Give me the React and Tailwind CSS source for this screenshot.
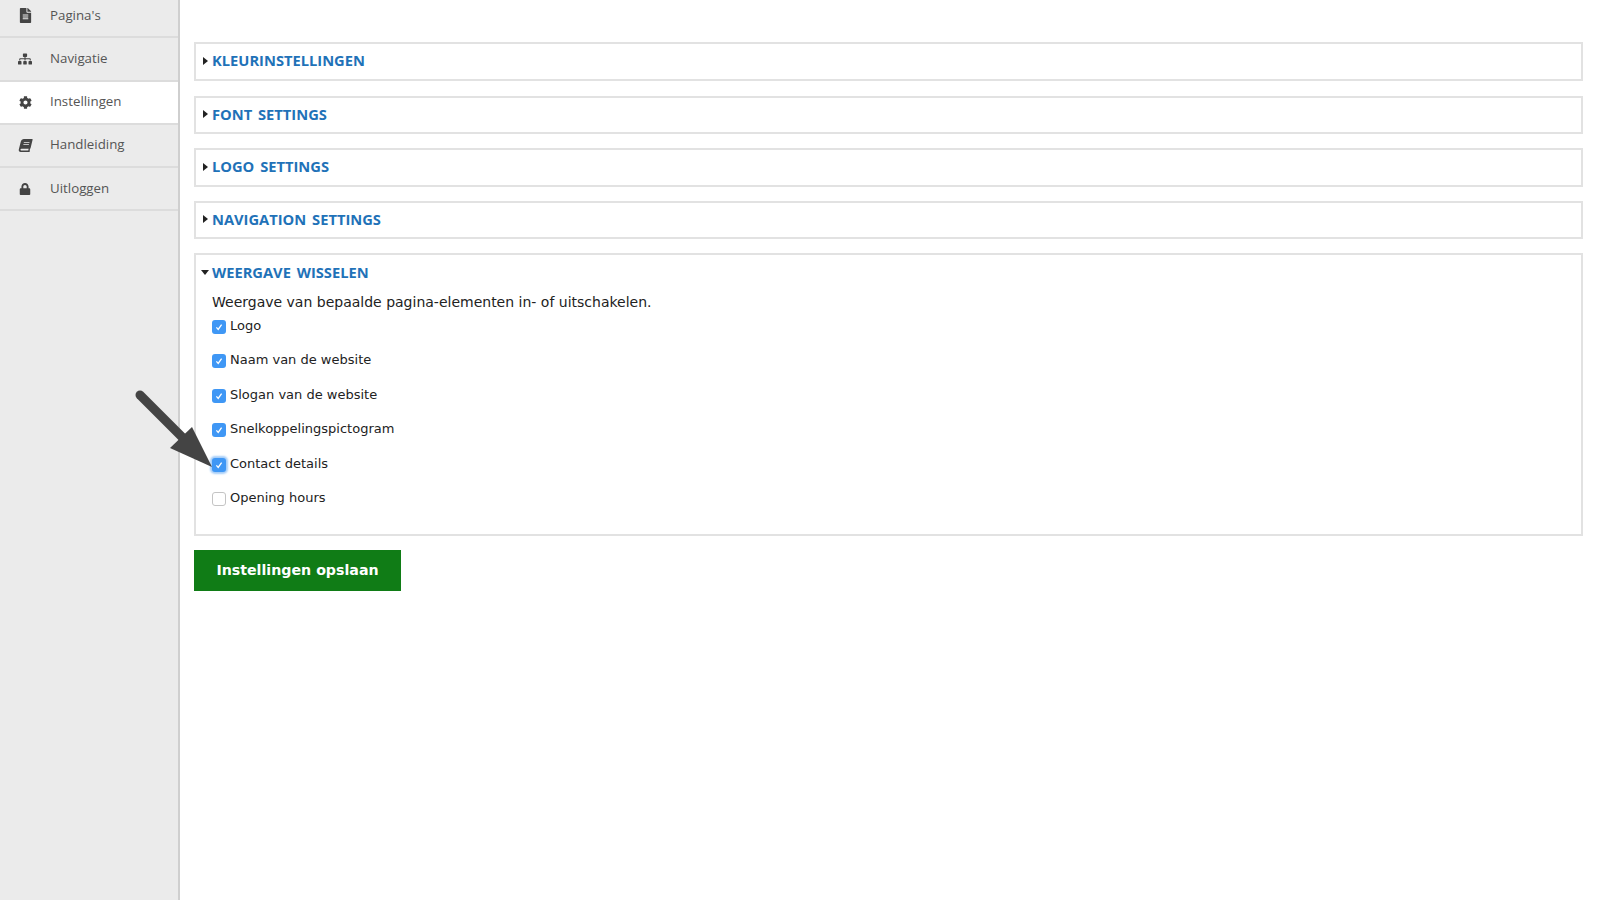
import { FaFileAlt, FaSitemap, FaCog, FaBook, FaLock } from "react-icons/fa";

const navItems = [
  { label: "Pagina's", icon: FaFileAlt, size: 15 },
  { label: "Navigatie", icon: FaSitemap, size: 14 },
  { label: "Instellingen", icon: FaCog, size: 13, active: true },
  { label: "Handleiding", icon: FaBook, size: 13, slanted: true },
  { label: "Uitloggen", icon: FaLock, size: 12 },
];

const collapsedPanels = [
  { title: "KLEURINSTELLINGEN", height: "h-[39px]", gap: "mb-[15px]" },
  { title: "FONT SETTINGS", height: "h-[38px]", gap: "mb-[14px]" },
  { title: "LOGO SETTINGS", height: "h-[39px]", gap: "mb-[14px]" },
  { title: "NAVIGATION SETTINGS", height: "h-[38px]", gap: "mb-[14px]" },
];

const options = [
  { label: "Logo", checked: true },
  { label: "Naam van de website", checked: true },
  { label: "Slogan van de website", checked: true },
  { label: "Snelkoppelingspictogram", checked: true },
  { label: "Contact details", checked: true, focused: true },
  { label: "Opening hours", checked: false },
];

function Checkbox({ checked, focused }) {
  if (!checked) {
    return <span className="mt-[4px] h-[14px] w-[14px] shrink-0 rounded-[3px] border border-[#c4c4c4] bg-white" />;
  }
  return (
    <span
      className={`mt-[4px] flex h-[14px] w-[14px] shrink-0 items-center justify-center rounded-[3px] bg-[#3f97f5] ${
        focused ? "shadow-[0_0_2px_2px_#a5cdf8]" : ""
      }`}
    >
      <svg width="10" height="10" viewBox="0 0 10 10" fill="none">
        <path d="M2.4 5.4 L4.2 7.4 L7.6 2.6" stroke="#fff" strokeWidth="1.3" />
      </svg>
    </span>
  );
}

export default function App() {
  return (
    <div className="relative flex h-[900px] overflow-hidden bg-white font-['Open_Sans',sans-serif]">
      {/* sidebar */}
      <aside className="w-[180px] shrink-0 border-r-[2px] border-[#cfcfcf] bg-[#ebebeb]">
        <ul className="-mt-[5px]">
          {navItems.map((item) => (
            <li
              key={item.label}
              className={`flex h-[43.25px] items-center border-b-[2px] border-[#dcdcdc] text-[13.3px] text-[#555] ${
                item.active ? "bg-white" : ""
              }`}
            >
              <span className="flex w-[50px] justify-center text-[#444]">
                <item.icon size={item.size} className={item.slanted ? "-skew-x-[14deg]" : ""} />
              </span>
              <span>{item.label}</span>
            </li>
          ))}
        </ul>
      </aside>

      {/* content */}
      <main className="flex-1 pl-[14px] pr-[17px] pt-[42px]">
        {collapsedPanels.map((panel) => (
          <section
            key={panel.title}
            className={`flex items-center border-2 border-[#e2e2e2] pb-[2px] pl-[7px] ${panel.height} ${panel.gap}`}
          >
            <span className="mr-[4px] h-0 w-0 border-y-[4px] border-l-[5px] border-y-transparent border-l-[#222]" />
            <h2 className="text-[14.7px] font-bold leading-none text-[#1f72b8] [word-spacing:2px]">{panel.title}</h2>
          </section>
        ))}

        <section className="h-[283px] border-2 border-[#e2e2e2] pl-[16px] pt-[8px]">
          <div className="-ml-[11px] flex h-[18px] items-center">
            <span className="mr-[3px] h-0 w-0 border-x-[4px] border-t-[5px] border-x-transparent border-t-[#222]" />
            <h2 className="text-[14.7px] font-bold leading-none text-[#1f72b8] [word-spacing:2px]">WEERGAVE WISSELEN</h2>
          </div>
          <p className="mt-[11px] h-[24px] font-['DejaVu_Sans',sans-serif] text-[14px] leading-[20px] text-[#222]">
            Weergave van bepaalde pagina-elementen in- of uitschakelen.
          </p>
          <div className="flex flex-col gap-[14.4px] font-['DejaVu_Sans',sans-serif] text-[13px] leading-[20px] text-[#222]">
            {options.map((option) => (
              <label key={option.label} className="flex h-[20px] items-start gap-[4px]">
                <Checkbox checked={option.checked} focused={option.focused} />
                <span>{option.label}</span>
              </label>
            ))}
          </div>
        </section>

        <button className="mt-[14px] h-[41px] w-[207px] bg-[#107c16] pt-[1px] font-['DejaVu_Sans',sans-serif] text-[14.2px] font-bold text-white">
          Instellingen opslaan
        </button>
      </main>

      {/* annotation arrow */}
      <svg className="pointer-events-none absolute left-[130px] top-[385px]" width="90" height="90" viewBox="130 385 90 90">
        <path d="M140 395 L185 440" stroke="#444" strokeWidth="9" strokeLinecap="round" fill="none" />
        <path d="M192 427 L170 448 L212 467 Z" fill="#444" />
      </svg>
    </div>
  );
}
